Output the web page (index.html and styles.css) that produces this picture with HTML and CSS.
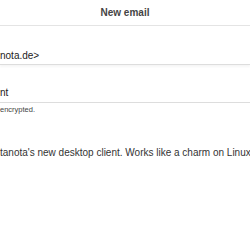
FILE: index.html
```html
<!DOCTYPE html>
<html>
  <head>
    <title>New email</title>
    <meta charset="utf-8">
    <link rel="stylesheet" href="styles.css">
  </head>
  <body>
    <div id="otsikko">New email</div>
    <div id="lomake">
      <div class="kentta lahettaja">nota.de&gt;</div>
      <div class="kentta aihe">nt</div>
      <div class="huom">encrypted.</div>
      <div class="viesti">tanota's new desktop client. Works like a charm on Linux</div>
    </div>
  </body>
</html>
```

FILE: styles.css
```css
html, body{
  margin: 0;
  background-color: #fff;
  overflow: hidden;
  font-family: "Liberation Sans", Arial, sans-serif;
}
#otsikko{
  height: 25px;
  line-height: 25px;
  text-align: center;
  font-size: 10px;
  font-weight: bold;
  color: #444;
  border-bottom: 1px solid #e4e4e4;
}
#lomake{
  white-space: nowrap;
}
.kentta{
  font-size: 10px;
  line-height: 12px;
  color: #222;
  border-bottom: 1px solid #ddd;
}
.lahettaja{
  padding-top: 24px;
  padding-bottom: 2px;
  box-shadow: 0 2px 2px rgba(0,0,0,0.04);
}
.aihe{
  padding-top: 22px;
  padding-bottom: 3px;
}
.huom{
  font-size: 7.5px;
  line-height: 10px;
  color: #444;
  margin-top: 2px;
}
.viesti{
  margin-top: 32px;
  font-size: 10px;
  line-height: 12px;
  color: #333;
}
```
